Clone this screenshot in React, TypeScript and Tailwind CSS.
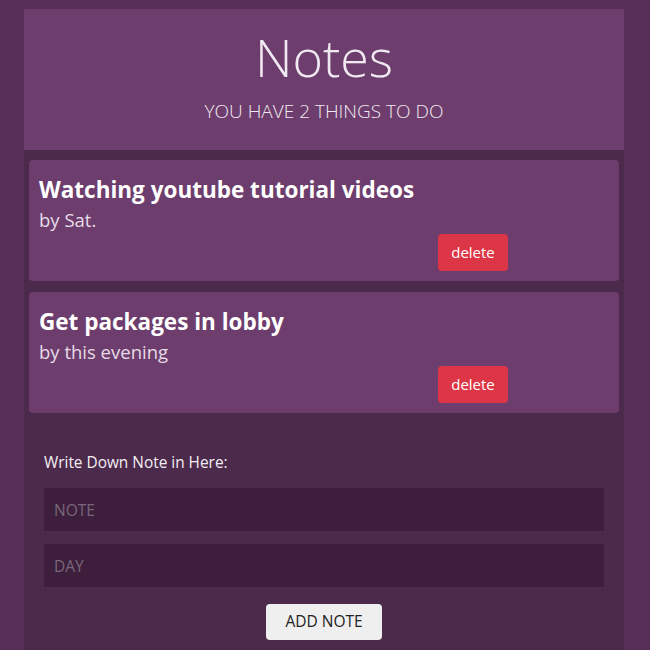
const notes = [
  { id: 1, text: "Watching youtube tutorial videos", day: "by Sat." },
  { id: 2, text: "Get packages in lobby", day: "by this evening" },
];

export default function App() {
  return (
    <div
      className="min-h-[650px] bg-[#552f55] pt-[9px]"
      style={{ fontFamily: '"Open Sans", "Noto Sans", sans-serif' }}
    >
      <div className="ml-[24px] w-[600px] bg-[#4c2a4b] pb-4">
        {/* Header */}
        <header className="flex h-[141px] flex-col items-center bg-[#6d3d6d] pt-[15px] text-[#f1e9f1]">
          <h1 className="text-[52px] font-light leading-[66px]">Notes</h1>
          <p className="mt-[7px] text-[19px] font-light uppercase">
            You have {notes.length} things to do
          </p>
        </header>

        {/* Notes list */}
        <div className="flex flex-col gap-[11px] px-[5px] pt-[10px]">
          {notes.map((note) => (
            <div
              key={note.id}
              className="h-[121px] rounded-[4px] bg-[#6d3d6d] px-[10px] pt-[14px]"
            >
              <h3 className="text-[22.5px] font-bold leading-[32px] text-white">
                {note.text}
              </h3>
              <p className="text-[18.5px] leading-[28px] text-[#e6dce6]">
                {note.day}
              </p>
              <div className="flex justify-end pr-[101px]">
                <button className="h-[37px] w-[70px] rounded-[4px] bg-[#dc3545] text-[15px] text-white">
                  delete
                </button>
              </div>
            </div>
          ))}
        </div>

        {/* Form */}
        <form className="px-[20px] pt-[38px]">
          <label className="block text-[15.4px] text-[#f3eef3]">
            Write Down Note in Here:
          </label>
          <input
            placeholder="NOTE"
            className="mt-[14px] block h-[43px] w-full bg-[#3d1f3d] px-[10px] text-[15.5px] text-white placeholder:text-[#7a667a] outline-none"
          />
          <input
            placeholder="DAY"
            className="mt-[13px] block h-[43px] w-full bg-[#3d1f3d] px-[10px] text-[15.5px] text-white placeholder:text-[#7a667a] outline-none"
          />
          <div className="mt-[17px] flex justify-center">
            <button
              type="button"
              className="h-[36px] w-[116px] rounded-[4px] bg-[#efefef] text-[15.5px] text-[#222]"
            >
              ADD NOTE
            </button>
          </div>
        </form>
      </div>
    </div>
  );
}
